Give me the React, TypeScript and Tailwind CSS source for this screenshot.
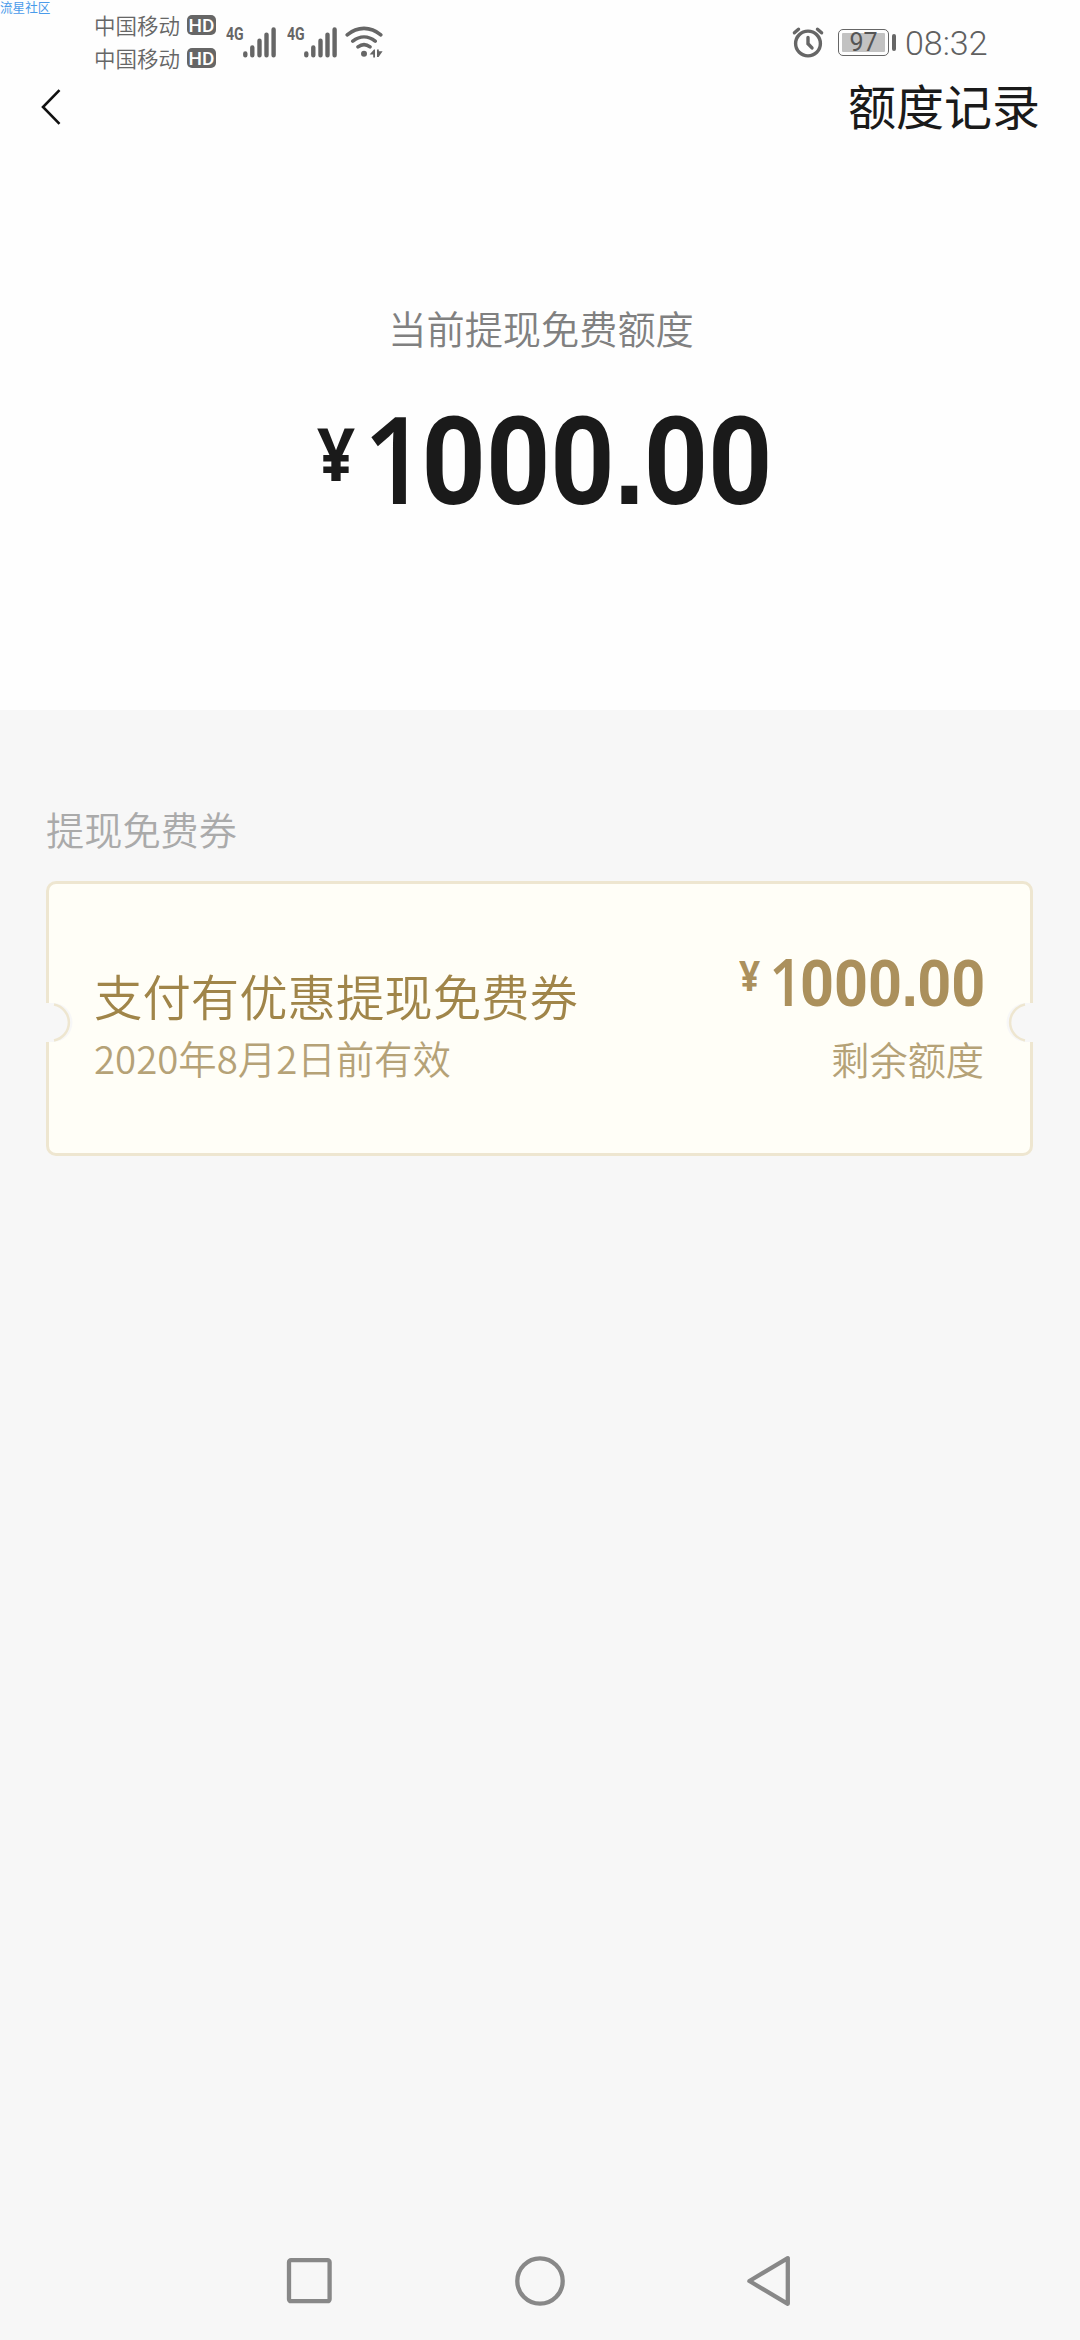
function Carrier() {
  return (
    <div className="flex h-[33px] items-center">
      <span className="w-[93px] text-[21.5px] leading-none font-[350] whitespace-nowrap text-[#666]">中国移动</span>
      <span className="mt-px flex h-5 w-[29px] items-center justify-center rounded-[5px] bg-[#666] font-[Roboto,sans-serif] text-[19px] leading-none font-medium text-white">
        HD
      </span>
    </div>
  );
}

function Signal() {
  return (
    <div className="flex h-[30px] w-[61px]">
      <span className="h-4 w-[17px] origin-left scale-x-[0.76] font-[Roboto,sans-serif] text-[18.5px] leading-[15px] font-bold text-[#666]">4G</span>
      <svg className="h-[31px] w-[33px]" viewBox="0 0 33 31" fill="none" stroke="#666" strokeWidth="4.4" strokeLinecap="round">
        <path d="M2.3 26.4v1.8M9.3 20.4v7.8M16.5 13.8v14.4M23.5 7.6v20.6M30.6 2.4v25.8" />
      </svg>
    </div>
  );
}

function StatusBar() {
  return (
    <header className="flex h-[76px] shrink-0 items-start pl-[94px]">
      <div className="w-[132px] pt-[8px]">
        <Carrier />
        <Carrier />
      </div>
      <div className="flex pt-[27px]">
        <Signal />
        <Signal />
      </div>
      <svg className="mt-[26px] -ml-[3px] h-[32px] w-[38px]" viewBox="0 0 38 32" fill="none" stroke="#666" strokeWidth="3.6" strokeLinecap="round">
        <path d="M2.2 8.8C12.5.2 25.5.2 35.8 8.8M7.8 15.2c7-5.6 15.4-5.6 22.4 0M13 20.9c3.8-3 8.2-3 12 0" />
        <circle cx="19" cy="27.7" r="3" fill="#666" stroke="none" />
        <path d="M24.6 28.4l4.4-5h1v8h-1.8v-3zM32 23.4h1.8v1.8h3.8l-4 5.8H32z" fill="#666" stroke="none" />
      </svg>
      <div className="ml-[409px] flex items-start pt-[26px]">
        <svg className="h-[32px] w-[32px]" viewBox="0 0 32 32" fill="none" stroke="#666" strokeWidth="3.4" strokeLinecap="round">
          <circle cx="16" cy="17.5" r="12.4" />
          <path d="M16 11.5v6.2l4 4.2M2.4 6.8l4.1-3.6M29.6 6.8l-4.1-3.6" />
        </svg>
        <div className="mt-[3px] ml-[14px] flex h-[27px] w-[51px] rounded-[5px] border border-[#666] p-[3px]">
          <div className="flex flex-1 items-center justify-center rounded-[1px] bg-[#c2c2c2] font-[Roboto,sans-serif] text-[25px] leading-none text-[#555]">97</div>
        </div>
        <div className="mt-2 ml-[3px] h-[17px] w-[4px] rounded-[2px] bg-[#666]" />
        <span className="ml-[9px] font-[Roboto,sans-serif] text-[34px] leading-[35px] font-[350] text-[#606060]">08:32</span>
      </div>
    </header>
  );
}

// digits are set in Roboto, the "1" and "¥" in Open Sans for their flat cut strokes
function Digits() {
  return (
    <>
      <span className="-mr-[0.05em] font-['Open_Sans'] font-semibold">1</span>000
      <span className="-mx-[0.01em] font-['Liberation_Sans']">.</span>00
    </>
  );
}

function Notch() {
  return (
    <svg className="h-[39px] w-[30px]" viewBox="0 0 30 39">
      <path d="M0 0H9A19.5 19.5 0 0 1 9 39H0z" fill="#f7f7f7" />
      <path d="M10 1.6A18.2 18.2 0 0 1 10 37.4" fill="none" stroke="#eee6d0" strokeWidth="2.5" />
    </svg>
  );
}

function NavBar() {
  return (
    <nav className="mt-auto flex h-[120px] justify-center pt-[2px]">
      <svg className="h-[116px] w-[600px]" viewBox="0 0 600 116" fill="none" stroke="#888" strokeWidth="4.3" strokeLinejoin="round">
        <rect x="49" y="38.2" width="40.6" height="41" rx="2" />
        <circle cx="300" cy="59" r="22.7" />
        <path d="M547.8 36.2v45.6L509.4 59z" />
      </svg>
    </nav>
  );
}

export default function App() {
  return (
    <div className="relative flex h-[2340px] w-[1080px] flex-col overflow-hidden bg-[#f7f7f7] font-['Noto_Sans_CJK_SC',sans-serif]">
      <span className="absolute top-0 left-0 text-[12.6px] leading-[13px] text-[#4a9bea]">流星社区</span>

      <section className="flex h-[710px] shrink-0 flex-col bg-[#fefefe]">
        <StatusBar />
        <div className="flex h-[62px] items-center justify-between pr-[40px] pl-[41px]">
          <svg className="h-[36px] w-[21px]" viewBox="0 0 21 36" fill="none" stroke="#111" strokeWidth="2.6">
            <path d="M18.5 1.2L2 18l16.5 16.8" />
          </svg>
          <h1 className="-mt-1.5 text-[48px] leading-none text-[#1a1a1a]">额度记录</h1>
        </div>

        <p className="mt-[170px] pl-[2px] text-center text-[38.2px] leading-[40px] font-[350] text-[#808080]">当前提现免费额度</p>
        <div className="mt-[48px] flex pl-[317px] font-[Roboto,sans-serif] font-bold text-[#1a1a1a]">
          <span className="mt-[20px] w-[46px] shrink-0 origin-left scale-x-[0.9] font-['Open_Sans'] text-[74px] leading-[74px]">¥</span>
          <span className="shrink-0 origin-left scale-x-[0.92] text-[122px] leading-[122px] whitespace-nowrap"><Digits /></span>
        </div>
      </section>

      <h2 className="mt-[99px] pl-[46px] text-[38.2px] leading-[40px] font-[350] text-[#aaa]">提现免费券</h2>

      <div className="relative mt-[32px] ml-[46px] flex h-[275px] w-[987px] justify-between rounded-[10px] border-[3px] border-[#eee6d0] bg-[#fffef7] px-[46px]">
        <div className="-ml-px pt-[85px]">
          <p className="text-[48.4px] leading-[52px] font-[350] text-[#a08549]">支付有优惠提现免费券</p>
          <p className="mt-[16px] text-[38.4px] leading-[40px] font-[350] text-[#b5a277]">2020年8月2日前有效</p>
        </div>
        <div className="flex flex-col items-end pt-[64px]">
          <div className="flex w-[246px] font-[Roboto,sans-serif] font-bold text-[#ab905c]">
            <span className="mt-[6px] ml-px w-[30px] shrink-0 origin-left scale-x-[0.88] font-['Open_Sans'] text-[42px] leading-[42px]">¥</span>
            <span className="shrink-0 origin-left scale-x-[0.905] text-[65.5px] leading-[66px] whitespace-nowrap"><Digits /></span>
          </div>
          <p className="mt-[22px] text-[38.2px] leading-[40px] font-[350] text-[#b5a277]">剩余额度</p>
        </div>
        <div className="absolute top-[119px] -left-[5px]">
          <Notch />
        </div>
        <div className="absolute top-[119px] -right-[5px] -scale-x-100">
          <Notch />
        </div>
      </div>

      <NavBar />
    </div>
  );
}
